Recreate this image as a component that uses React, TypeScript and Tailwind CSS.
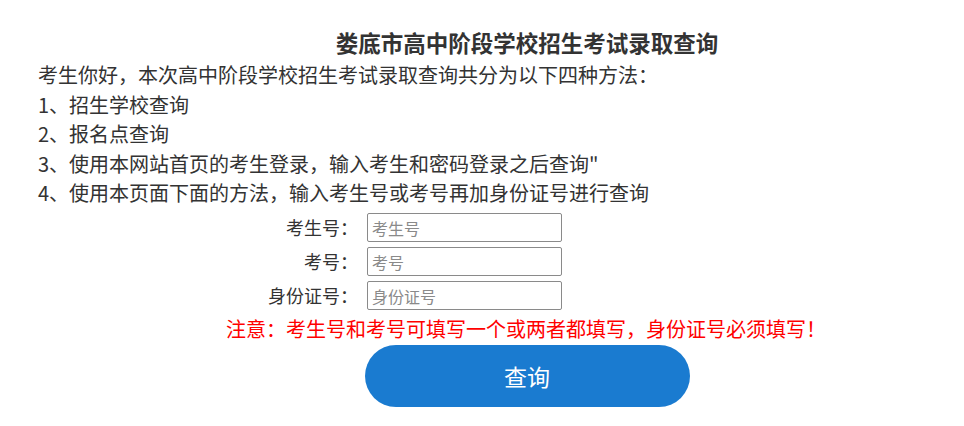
import React from "react";

const font = { fontFamily: '"Noto Sans CJK SC", "Noto Sans", sans-serif' };

function Row({ label, ph }: { label: string; ph: string }) {
  return (
    <div className="flex items-center h-[29px] mb-[5px]">
      <div className="w-[358px] text-right text-[18px] leading-[29px] text-[#333333]">{label}</div>
      <input
        placeholder={ph}
        className="ml-[9px] w-[195px] h-[29px] border border-[#8a8a8a] rounded-[2px] px-[4px] text-[16px] text-[#333333] placeholder:text-[#8a8a8a] outline-none"
        style={font}
      />
    </div>
  );
}

export default function App() {
  return (
    <div className="w-[964px] h-[426px] bg-white overflow-hidden text-[#333333]" style={font}>
      <div className="pt-[24px] pl-[90px] text-center text-[22.5px] font-bold leading-[36px]">
        娄底市高中阶段学校招生考试录取查询
      </div>
      <div className="pl-[38px] text-[20px] leading-[29.5px]">
        <div>考生你好，本次高中阶段学校招生考试录取查询共分为以下四种方法：</div>
        <div>1、招生学校查询</div>
        <div>2、报名点查询</div>
        <div>3、使用本网站首页的考生登录，输入考生和密码登录之后查询"</div>
        <div>4、使用本页面下面的方法，输入考生号或考号再加身份证号进行查询</div>
      </div>
      <div className="mt-[5.5px]">
        <Row label="考生号：" ph="考生号" />
        <Row label="考号：" ph="考号" />
        <Row label="身份证号：" ph="身份证号" />
      </div>
      <div className="mt-[-1px] pl-[88px] text-center text-[20px] leading-[30px] text-[#ff0000]">
        注意：考生号和考号可填写一个或两者都填写，身份证号必须填写！
      </div>
      <div className="mt-[1px] pl-[90px] flex justify-center">
        <button className="w-[325px] h-[62px] rounded-full bg-[#1a7bd0] text-white text-[23px]" style={font}>
          查询
        </button>
      </div>
    </div>
  );
}
